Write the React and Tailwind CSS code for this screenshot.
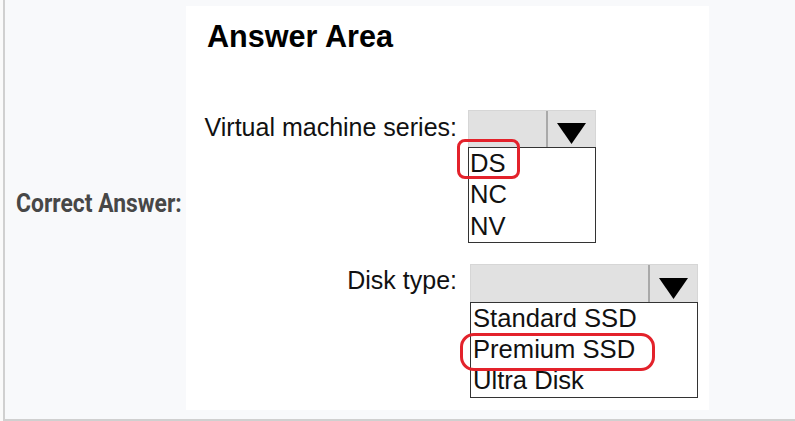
function Dropdown({ width, headerH, items, mark, markClass, pad }) {
  return (
    <div className={width}>
      <div className={`flex ${headerH} bg-[#e1e1e1] border-t border-l border-r border-[#d6d6d6]`}>
        <div className="flex-1" />
        <div className="w-[49px] border-l-2 border-[#a9a9a9] flex items-end justify-center pb-[3px]">
          <svg width="29" height="21" viewBox="0 0 29 21">
            <polygon points="0,0 29,0 14.5,21" fill="#000" />
          </svg>
        </div>
      </div>
      <div className="relative border border-[#333] bg-white">
        {items.map((it) => (
          <div key={it} className={`${pad} text-[25.6px] leading-[31.3px] text-[#111] whitespace-nowrap`}>
            {it}
          </div>
        ))}
        {mark && <div className={`absolute border-[3px] border-[#e3222b] ${markClass}`} />}
      </div>
    </div>
  );
}

export default function App() {
  return (
    <div className="h-[421px] w-[795px] bg-[#fafafa] font-['Liberation_Sans',Arial,sans-serif]">
      <div className="ml-[3px] h-[421px] flex border-l-2 border-b-2 border-[#d0d0d0] bg-[#f8f9fb]">
        <div className="w-[181px] shrink-0 pl-[11px] pt-[188px]">
          <div className="origin-left scale-x-[0.88] font-['Roboto',sans-serif] font-bold text-[26px] leading-[30px] text-[#474747] whitespace-nowrap">
            Correct Answer:
          </div>
        </div>

        <div className="mt-[6px] w-[523px] h-[404px] bg-white">
          <h2 className="pt-[13px] pl-[21px] text-[30.6px] leading-[34px] font-bold text-black">Answer Area</h2>

          <div className="mt-[57px] pl-[18px] grid grid-cols-[253px_auto] gap-x-[11px] gap-y-[21px] items-start">
            <div className="pt-[2px] text-right text-[25px] leading-[30px] text-[#111] whitespace-nowrap">
              Virtual machine series:
            </div>
            <Dropdown
              width="w-[128px]"
              headerH="h-[37px]"
              items={["DS", "NC", "NV"]}
              pad="pl-[1px]"
              mark
              markClass="-left-[12px] -top-[9px] w-[63px] h-[40px] rounded-[8px]"
            />

            <div className="pt-[1px] text-right text-[25px] leading-[30px] text-[#111] whitespace-nowrap">
              Disk type:
            </div>
            <div className="ml-[2px]">
              <Dropdown
                width="w-[228px]"
                headerH="h-[38px]"
                items={["Standard SSD", "Premium SSD", "Ultra Disk"]}
                pad="pl-[2px]"
                mark
                markClass="-left-[11px] top-[30px] w-[195px] h-[38px] rounded-[14px]"
              />
            </div>
          </div>
        </div>
      </div>
    </div>
  );
}
